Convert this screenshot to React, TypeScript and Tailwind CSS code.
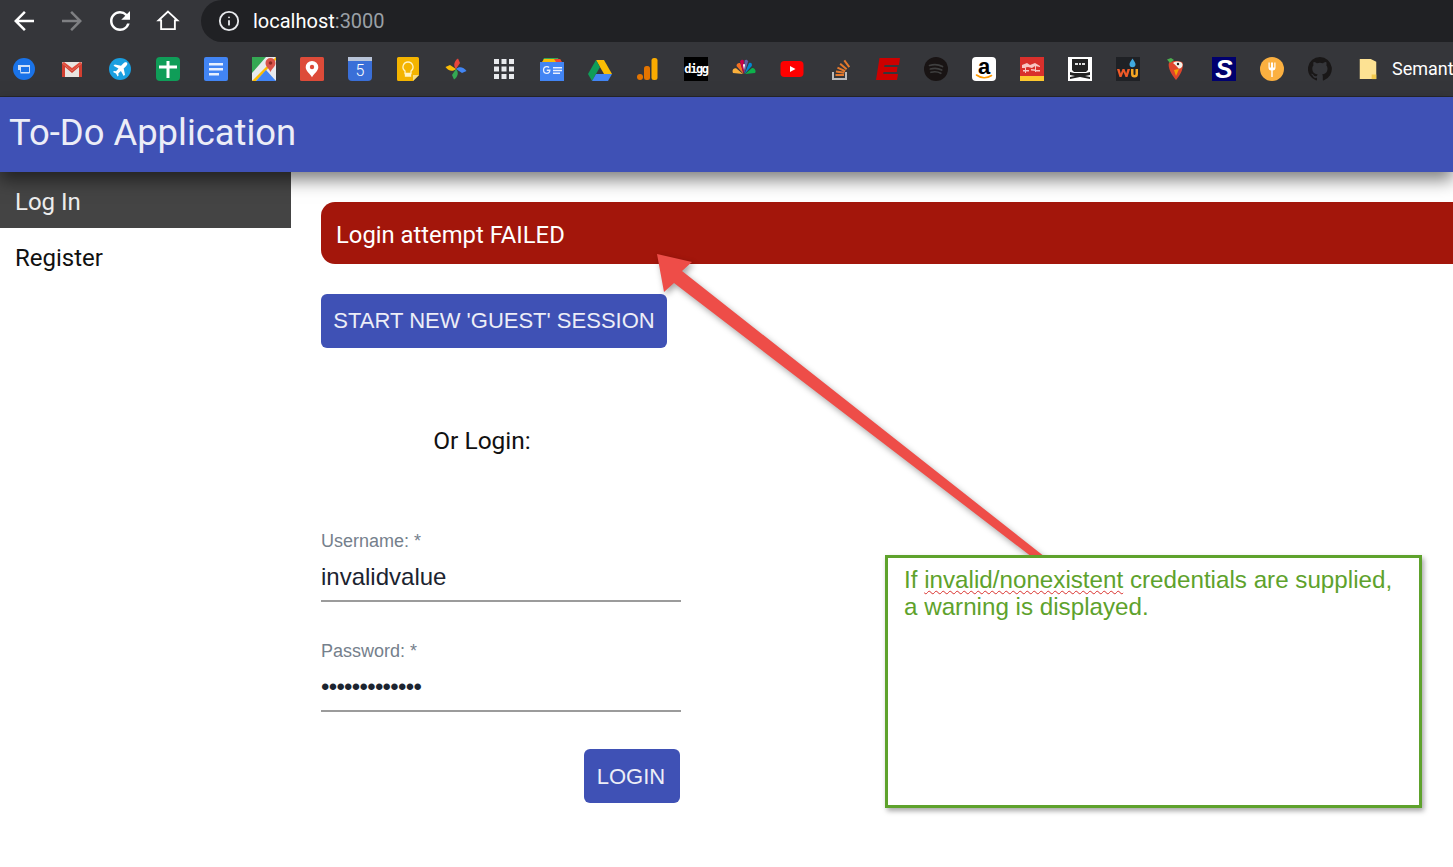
import { ReactNode } from 'react'
import { Info } from 'lucide-react'

const Tile = ({ children, className = '' }: { children: ReactNode; className?: string }) => (
  <div className={`w-6 h-6 shrink-0 flex items-center justify-center ${className}`}>{children}</div>
)

const Svg = ({ children }: { children: ReactNode }) => (
  <svg viewBox="0 0 24 24" className="w-6 h-6 shrink-0">
    {children}
  </svg>
)

const NavIcon = ({ d, className = 'fill-white' }: { d: string; className?: string }) => (
  <svg viewBox="0 0 24 24" className={`w-[30px] h-[30px] shrink-0 ${className}`}>
    <path d={d} />
  </svg>
)

const BOOKMARKS: ReactNode[] = [
  <Svg>
    <circle cx="12" cy="12" r="11" fill="#1a73e8" />
    <path d="M6 8h12v7.500a1 1 0 0 1-1 1H8.500L8 13H6z" fill="#cfe0f7" />
    <rect x="9" y="10" width="8" height="5" fill="#1a73e8" />
  </Svg>,
  <Svg>
    <rect x="2" y="5" width="20" height="15" rx="1" fill="#e8e4e0" />
    <path d="M2 6l10 8 10-8v14h-3V10l-7 6-7-6v10H2z" fill="#d23f31" />
    <path d="M2 6l2-1 8 6 8-6 2 1-10 8z" fill="#e04a3a" />
  </Svg>,
  <Svg>
    <circle cx="12" cy="12" r="11" fill="#1a9fe0" />
    <path d="M18.500 5.500c-1-.8-2.200 0-3 .8L13 8.800 6.800 7.500 5.500 8.800l5 2.800-2.500 2.600-2-.3-1 1 3 1.600 1.600 3 1-1-.3-2 2.600-2.500 2.800 5 1.300-1.300-1.300-6.200 2.500-2.500c.8-.8 1.600-2.100.8-3.500z" fill="#fff" />
  </Svg>,
  <Tile className="bg-[#0f9d58] rounded-sm">
    <svg viewBox="0 0 24 24" className="w-6 h-6">
      <path d="M10.500 4h3v4.500H21v3h-7.500V21h-3v-9.500H3v-3h7.500z" fill="#fff" />
    </svg>
  </Tile>,
  <Svg>
    <rect width="24" height="24" rx="2" fill="#4285f4" />
    <path d="M5 6h14v2.500H5zM5 11h14v2.500H5zM5 16h10v2.500H5z" fill="#e8f0fe" />
  </Svg>,
  <Svg>
    <rect width="24" height="24" rx="1" fill="#e8eaed" />
    <path d="M0 0h14L0 16z" fill="#34a853" />
    <path d="M0 24l24-24v3L4 24z" fill="#fbbc04" />
    <path d="M4 24L14 13l10 11z" fill="#4285f4" />
    <path d="M18.500 1a5 5 0 0 1 5 5c0 3.500-3.500 5.500-5 9-1.500-3.500-5-5.500-5-9a5 5 0 0 1 5-5z" fill="#d9534a" />
    <circle cx="18.500" cy="6" r="1.800" fill="#8e2a24" />
  </Svg>,
  <Svg>
    <rect width="24" height="24" rx="1.500" fill="#dd4b39" />
    <path d="M12 4a6.300 6.300 0 0 1 6.300 6.300c0 3.700-4 6-6.300 10-2.300-4-6.300-6.300-6.300-10A6.300 6.300 0 0 1 12 4z" fill="#fff" />
    <circle cx="12" cy="10" r="2.200" fill="#dd4b39" />
  </Svg>,
  <Tile className="relative bg-[#3a6fd8] rounded-sm">
    <div className="absolute top-0 inset-x-0 h-1 bg-[#b8c4d8]" />
    <span className="mt-1 font-['Roboto',sans-serif] font-light text-[16px] leading-none text-white">5</span>
  </Tile>,
  <Svg>
    <path d="M1 1.500A1.500 1.500 0 0 1 2.500 0h19A1.500 1.500 0 0 1 23 1.500V18l-6 6H2.500A1.500 1.500 0 0 1 1 22.500z" fill="#f4b400" />
    <path d="M17 24v-6h6z" fill="#f7dc84" />
    <path d="M12 5a5 5 0 0 1 3 9v2.500H9V14a5 5 0 0 1 3-9zM9.500 17.500h5V19h-5z" fill="none" stroke="#fff3c4" strokeWidth="1.300" />
  </Svg>,
  <Svg>
    <path d="M12 12C9 9 10 4 14 1.500l2 4.500z" fill="#e8453c" />
    <path d="M12 12c3-3 8-2 10.500 2l-4.500 2z" fill="#4285f4" />
    <path d="M12 12c3 3 2 8-2 10.500L8 18z" fill="#34a853" />
    <path d="M12 12C9 15 4 14 1.500 10L6 8z" fill="#fbbc05" />
  </Svg>,
  <Svg>
    <path d="M2 2h5v5H2zM9.500 2h5v5h-5zM17 2h5v5h-5zM2 9.500h5v5H2zM9.500 9.500h5v5h-5zM17 9.500h5v5h-5zM2 17h5v5H2zM9.500 17h5v5h-5zM17 17h5v5h-5z" fill="#e8eaed" />
  </Svg>,
  <Svg>
    <path d="M3 3l1-2h14l1 2z" fill="#34a853" />
    <path d="M2 5l2-3h16l1 3z" fill="#fbbc04" />
    <path d="M14 2h6l2 3h-6z" fill="#ea4335" />
    <rect y="5" width="24" height="19" fill="#4285f4" />
    <path d="M9.500 12.500H6.800v1.500h2.300c-.3 1.200-1.200 1.700-2.200 1.700a2.700 2.700 0 0 1 0-5.400c.7 0 1.300.2 1.700.6l1-1A4 4 0 0 0 6.900 9a4 4 0 0 0 0 8c2.400 0 3.800-1.900 3.600-4.500zM13 10h9v1.500h-9zM13 12.700h9v1.500h-9zM13 15.400h7v1.500h-7z" fill="#e8f0fe" />
  </Svg>,
  <Svg>
    <path d="M8 3h8l8 14h-8z" fill="#fbbc04" />
    <path d="M8 3L0 17l4 7 8-14z" fill="#0f9d58" />
    <path d="M4 24h16l4-7H8z" fill="#4285f4" />
  </Svg>,
  <Svg>
    <rect x="15.500" y="1" width="6" height="22" rx="2.500" fill="#f9ab00" />
    <rect x="8" y="9" width="6" height="14" rx="2.500" fill="#e37400" />
    <circle cx="4" cy="20" r="3" fill="#e37400" />
  </Svg>,
  <Tile className="bg-black">
    <span className="font-['DejaVu_Sans_Mono',monospace] font-bold text-[12px] leading-none tracking-[-1.400px] text-white">digg</span>
  </Tile>,
  <Svg>
    <path d="M11 17L1 16c-1.500-3 1-5.500 3.500-4.500z" fill="#fbb03b" />
    <path d="M11.500 17L4.500 9c0-3 3-3.500 4-2.500z" fill="#f37021" />
    <path d="M11.800 17L8 4.500c1-2 3-2 3.800-1z" fill="#cc004c" />
    <path d="M12.200 17l.4-13.500c1-1 3-1 3.500 1z" fill="#6460aa" />
    <path d="M12.500 17l4.500-11c1.500-1 3.500 0 2.800 3z" fill="#0089d0" />
    <path d="M13 17l7-6c2.500-.5 4.500 2.500 3 5z" fill="#0db14b" />
    <path d="M11 8l1 5 1-5a1 1 0 0 0-2 0z" fill="#fff" />
  </Svg>,
  <Svg>
    <rect x="0.500" y="4" width="23" height="16" rx="4" fill="#ff0000" />
    <path d="M10 9l5.500 3-5.500 3z" fill="#fff" />
  </Svg>,
  <Svg>
    <path d="M5 15v7h13v-7" fill="none" stroke="#bcbbbb" strokeWidth="2" />
    <path d="M7.500 19h8.500v-2H7.500zM7.800 15.600l8.400 1.200.3-2-8.400-1.200zM9 11.500l7.700 3.600.9-1.800-7.700-3.600zM11.500 7.500l6.500 5.500 1.300-1.500-6.500-5.500zM15.500 4l5 6.700 1.600-1.200-5-6.700z" fill="#e5792c" />
  </Svg>,
  <Svg>
    <path d="M3.500 1H24L23 8H8.500L8.200 10H21.500L20.800 15H7.500L7.200 17H22L21 23H0Z" fill="#cc0000" />
  </Svg>,
  <Svg>
    <circle cx="12" cy="12" r="12" fill="#191414" />
    <path d="M5.500 8.500c4-1.200 9-1 13 1M6.300 12c3.500-1 8-.8 11.400 1M7 15.300c3-.8 7-.6 9.800 1" fill="none" stroke="#3f3f3f" strokeWidth="1.700" strokeLinecap="round" />
  </Svg>,
  <Tile className="relative bg-white rounded-[4px]">
    <span className="font-['Liberation_Sans',sans-serif] font-bold text-[22px] leading-[20px] pb-[4px] text-black">a</span>
    <svg viewBox="0 0 24 24" className="absolute inset-0 w-6 h-6">
      <path d="M4.500 18c4.500 3.500 10.500 3.500 15 .5" fill="none" stroke="#ff9900" strokeWidth="1.600" strokeLinecap="round" />
    </svg>
  </Tile>,
  <Svg>
    <rect width="24" height="19" fill="#d9302c" />
    <rect y="19" width="24" height="5" fill="#fdc82f" />
    <path d="M2 8l5-2 3 2 5-2 5 3v1l-5-1-3 2-4-1-6 1zM3 13h6v1.500H3zM11 12l9 1v1.500l-9-1zM5 10h1v6H5zM15 8h1v7h-1z" fill="#f7c6c4" />
  </Svg>,
  <Svg>
    <rect width="24" height="24" fill="#fff" />
    <path d="M4 2h16v11l-2 2H6l-2-2z" fill="#222" />
    <path d="M7 6h3v2H7zM11 6h2v2h-2zM14 6h3v2h-3z" fill="#ddd" />
    <path d="M2 15l4 1h12l4-1v3l-5 1 5 1v2l-10-2-10 2v-2l5-1-5-1z" fill="#222" />
  </Svg>,
  <Svg>
    <rect width="24" height="24" fill="#1f2125" />
    <path d="M16.500 1.500c1.500 2.500 3 4 3 5.700a3 3 0 0 1-6 0c0-1.700 1.500-3.200 3-5.700z" fill="#3fa9e0" />
    <path d="M1 12l2.500 8h2L7.500 15 9.500 20h2L14 12h-2.500l-1.300 4.500L8.500 12h-2l-1.700 4.500L3.500 12z" fill="#f05a28" />
    <path d="M15 12v5a3.500 3.500 0 0 0 7 0v-5h-2.500v5a1 1 0 0 1-2 0v-5z" fill="#f5a623" />
  </Svg>,
  <Svg>
    <path d="M5 5.500c3.500-2 11-2 13.500 0 1.500 4.500-1.500 12-6.500 17.500C7.500 18 3.500 10.500 5 5.500z" fill="#e0452c" />
    <path d="M9 6c3-2 8-2 9.500 1 .5 3-2 5-4 4.500-1-1.500-3-3.500-5.500-5.500z" fill="#f4f1e8" />
    <circle cx="14" cy="7" r="1.200" fill="#222" />
    <path d="M3 2.500l4-1.500 3 2-4 3z" fill="#4caf50" />
    <path d="M10 13l5-1-3 7z" fill="#f4a300" />
  </Svg>,
  <Tile className="bg-[#00006e]">
    <span className="font-['Liberation_Sans',sans-serif] font-bold italic text-[26px] leading-[24px] text-white">S</span>
  </Tile>,
  <Svg>
    <circle cx="12" cy="12" r="12" fill="#fbb040" />
    <path d="M8.500 5.500v5a3 3 0 0 0 2.800 3V20h1.400v-6.500a3 3 0 0 0 2.800-3v-5h-1.200v5H13v-5h-2v5H9.700v-5z" fill="#fff" />
  </Svg>,
  <Svg>
    <path d="M12 0a12 12 0 0 0-3.800 23.400c.6.100.8-.3.800-.6v-2c-3.300.7-4-1.600-4-1.600-.6-1.400-1.400-1.800-1.400-1.800-1.100-.7.100-.7.100-.7 1.200.1 1.800 1.200 1.800 1.200 1.100 1.800 2.800 1.300 3.500 1 .1-.8.400-1.300.8-1.600-2.700-.3-5.500-1.300-5.500-5.900 0-1.300.5-2.400 1.200-3.200-.1-.3-.5-1.500.1-3.200 0 0 1-.3 3.300 1.200a11.500 11.500 0 0 1 6 0c2.300-1.500 3.300-1.200 3.300-1.200.7 1.700.2 2.900.1 3.200.8.800 1.200 1.900 1.200 3.200 0 4.600-2.800 5.600-5.500 5.900.4.400.8 1.100.8 2.200v3.300c0 .3.200.7.800.6A12 12 0 0 0 12 0z" fill="#191717" />
  </Svg>,
]

const Field = ({ label, value, dots }: { label: string; value: string; dots?: boolean }) => (
  <div className="w-[360px] font-['Liberation_Sans',sans-serif]">
    <div className="text-[18px] leading-[20px] text-[#75808c]">{label}</div>
    <div className={`h-[51px] pt-[2px] border-b-2 border-[#9b9b9b] flex items-center text-[#1c2430] ${dots ? 'text-[24px] tracking-[-0.700px]' : 'text-[24px]'}`}>
      {value}
    </div>
  </div>
)

export default function App() {
  return (
    <div className="relative w-[1453px] h-[867px] overflow-hidden bg-white font-['Roboto',sans-serif]">
      <div className="h-[42px] bg-[#35363a] flex items-center">
        <div className="w-[201px] h-full shrink-0 flex items-center gap-[18px] pl-[9px]">
          <NavIcon d="M20 11H7.830l5.590-5.590L12 4l-8 8 8 8 1.410-1.410L7.830 13H20v-2z" />
          <NavIcon d="M12 4l-1.410 1.410L16.170 11H4v2h12.170l-5.580 5.590L12 20l8-8z" className="fill-[#7f8083]" />
          <NavIcon d="M17.650 6.350A7.958 7.958 0 0 0 12 4c-4.420 0-7.990 3.580-7.990 8s3.570 8 7.990 8c3.730 0 6.840-2.550 7.730-6h-2.080A5.990 5.990 0 0 1 12 18c-3.310 0-6-2.690-6-6s2.690-6 6-6c1.660 0 3.140.690 4.220 1.780L13 11h7V4l-2.350 2.350z" />
          <svg viewBox="0 0 24 24" className="w-[30px] h-[30px] shrink-0">
            <path d="M12 4.500L19.500 11.500H17.500V18.500H6.500V11.500H4.500Z" fill="none" stroke="#fff" strokeWidth="1.500" strokeLinejoin="miter" />
          </svg>
        </div>
        <div className="flex-1 h-full bg-[#202124] rounded-l-[21px] flex items-center pl-[17px] gap-[13px] text-white">
          <Info size={22} strokeWidth={2} className="text-[#e8eaed]" />
          <span className="text-[20px] -mt-px">
            localhost<span className="text-[#9aa0a6]">:3000</span>
          </span>
        </div>
      </div>

      <div className="h-[55px] bg-[#35363a] border-b border-[#26272a] flex items-center pl-[12px] gap-[24px] overflow-hidden">
        {BOOKMARKS.map((icon, i) => (
          <div key={i} className="contents">
            {icon}
          </div>
        ))}
        <div className="flex items-center gap-[15px] ml-[3px] shrink-0">
          <svg viewBox="0 0 18 24" className="w-[18px] h-[22px] shrink-0">
            <path d="M0 1h12l6 3v19H0z" fill="#fde293" />
            <path d="M13 23v-5h5v5z" fill="#f2c94c" />
          </svg>
          <span className="text-[18px] text-white whitespace-nowrap pb-[1px]">Semant</span>
        </div>
      </div>

      <header className="relative z-10 h-[75px] bg-[#3f51b5] flex items-center pl-[9px] pb-[2px] shadow-[0_8px_16px_rgba(0,0,0,0.5)]">
        <h1 className="text-[36.400px] text-[#ecedf7] font-normal">To-Do Application</h1>
      </header>

      <div className="flex">
        <nav className="w-[291px] shrink-0 text-[24px]">
          <div className="h-[56px] pt-[4px] bg-[#444444] text-[#ededed] flex items-center pl-[15px]">Log In</div>
          <div className="h-[56px] pt-[4px] text-[#111] flex items-center pl-[15px]">Register</div>
        </nav>

        <main className="flex-1 min-w-0 pl-[30px] pt-[30px]">
          <div className="h-[62px] pt-[6px] bg-[#a3160b] rounded-l-[14px] flex items-center pl-[15px] text-[23.800px] text-white">
            Login attempt FAILED
          </div>

          <button className="mt-[30px] w-[346px] h-[54px] pb-[2px] bg-[#3f51b5] rounded-[6px] text-[22px] text-[#ecedf7] font-['Liberation_Sans',sans-serif] whitespace-nowrap">
            START NEW 'GUEST' SESSION
          </button>

          <div className="w-[322px] mt-[77px] text-center text-[24.500px] leading-[32px] text-[#111]">Or Login:</div>

          <div className="mt-[74px] flex flex-col gap-[39px]">
            <Field label="Username: *" value="invalidvalue" />
            <Field label="Password: *" value="•••••••••••••" dots />
          </div>

          <div className="w-[359px] mt-[37px] flex justify-end">
            <button className="w-[96px] h-[54px] bg-[#3f51b5] rounded-[6px] text-[22px] text-[#ecedf7] font-['Liberation_Sans',sans-serif] pr-[2px]">
              LOGIN
            </button>
          </div>
        </main>
      </div>

      <svg className="absolute inset-0 z-20 pointer-events-none drop-shadow-[2px_3px_3px_rgba(0,0,0,0.35)]" width="1453" height="867" viewBox="0 0 1453 867">
        <path d="M657 254L692 262L682 271L1045 557L1032 557L674 283L664 292Z" fill="#ee4d48" />
      </svg>

      <div className="absolute z-30 left-[885px] top-[555px] w-[537px] h-[253px] bg-white border-[3px] border-[#5ea22c] shadow-[2px_3px_5px_rgba(0,0,0,0.35)] pl-[16px] pt-[8px] font-['Liberation_Sans',sans-serif] text-[24.200px] leading-[27px] text-[#5ea22c]">
        If{' '}
        <span className="underline decoration-wavy decoration-[#d9302c] decoration-1 underline-offset-2">invalid/nonexistent</span>{' '}
        credentials are supplied,
        <br />a warning is displayed.
      </div>
    </div>
  )
}
